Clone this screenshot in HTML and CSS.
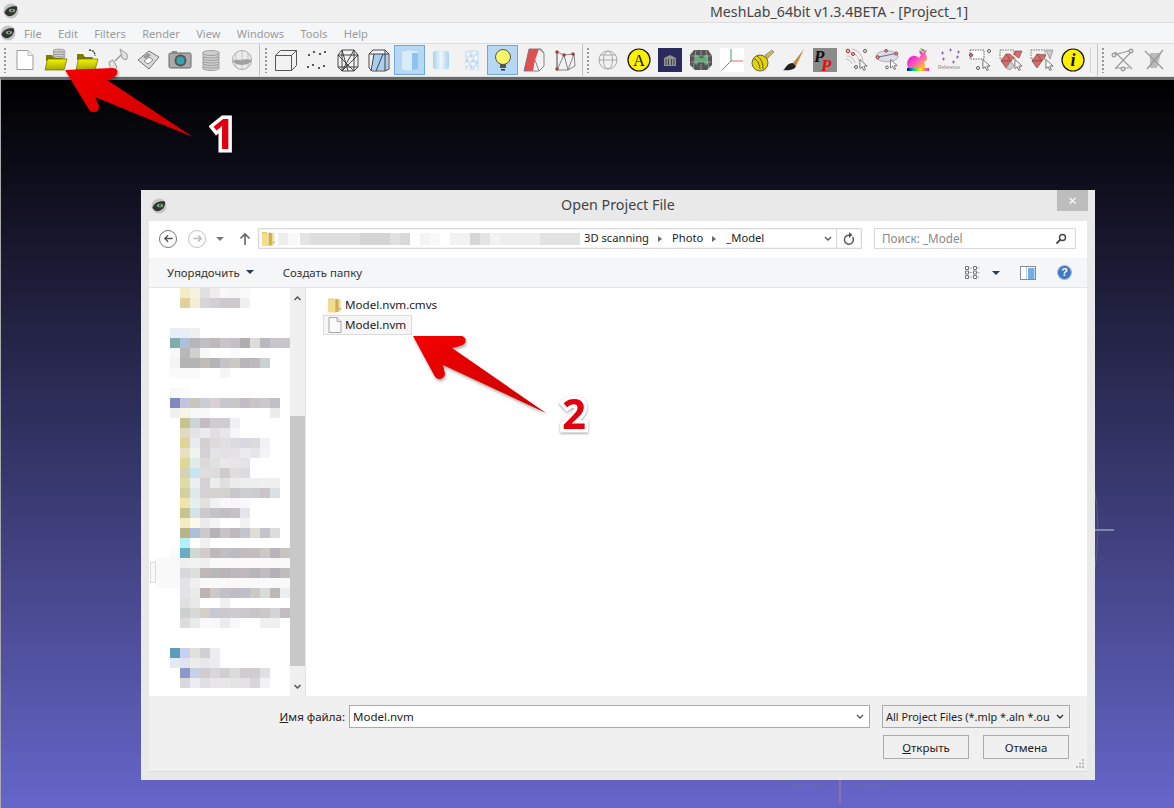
FILE: index.html
```html
<!DOCTYPE html>
<html lang="en">
<head>
<meta charset="utf-8">
<title>MeshLab</title>
<link rel="stylesheet" href="styles.css">
</head>
<body>
<svg class="defs" width="0" height="0">
  <defs>
    <linearGradient id="fy" x1="0" y1="0" x2="0" y2="1"><stop offset="0" stop-color="#f4f400"/><stop offset="1" stop-color="#a8a800"/></linearGradient>
  </defs>
  <symbol id="eye" viewBox="0 0 16 16">
    <circle cx="8" cy="8" r="7.500" fill="#c4c4c4"/>
    <path d="M1.500 9.500C3 5 8 2.500 14 3.500c.5 3-1 8-6 9.500-3 .7-5.500-1-6.500-3.500z" fill="#333"/>
    <ellipse cx="9" cy="7.500" rx="3.200" ry="1.800" fill="#7fa585"/>
    <circle cx="9" cy="7.500" r=".9" fill="#1b2b1b"/>
  </symbol>
  <symbol id="cur" viewBox="0 0 10 14">
    <path d="M1 1v10l2.500-2 1.800 4 1.800-.8-1.800-4H9z" fill="#fff" stroke="#555" stroke-width=".9"/>
  </symbol>
  <symbol id="folder" viewBox="0 0 14 17">
    <path d="M0 1.500h5l1 1h6V16H0z" fill="#e8c96f"/>
    <path d="M0 3h7.500v13.500H0z" fill="#f3dc8c"/>
    <path d="M7.500 1.500l3.500 1.500v12l-3.500 1.500z" fill="#cfae55"/>
    <path d="M11 3l2.500-1v13L11 15.500z" fill="#f2e4ae"/>
    <path d="M11.500 12l2-.5v1.500l-2 .5z" fill="#8fb4c9"/>
  </symbol>
  <symbol id="doc" viewBox="0 0 14 16">
    <path d="M1 .5h8l4 4v11H1z" fill="#fafafa" stroke="#a8a8a8"/>
    <path d="M9 .5v4h4" fill="#eee" stroke="#a8a8a8"/>
  </symbol>
</svg>

<div class="app">
  <header class="titlebar">
    <svg class="logo"><use href="#eye"/></svg>
    <span class="apptitle">MeshLab_64bit v1.3.4BETA - [Project_1]</span>
  </header>
  <nav class="menubar">
    <svg class="logo"><use href="#eye"/></svg>
    <span class="menu">File</span><span class="menu">Edit</span><span class="menu">Filters</span><span class="menu">Render</span><span class="menu">View</span><span class="menu">Windows</span><span class="menu">Tools</span><span class="menu">Help</span>
  </nav>
  <div class="toolbar">
    <i class="grip"></i>
    <span class="tb"><svg viewBox="0 0 24 24"><path d="M4 2.500h11l5 5v14H4z" fill="#fff" stroke="#9a9a9a"/><path d="M15 2.500v5h5" fill="#eee" stroke="#bbb"/></svg></span>
    <span class="tb"><svg viewBox="0 0 24 24"><g fill="#d4d4d4" stroke="#777" stroke-width=".7"><ellipse cx="15" cy="3" rx="6" ry="1.800"/><ellipse cx="15" cy="5.500" rx="6" ry="1.800"/><ellipse cx="15" cy="8" rx="6" ry="1.800"/><ellipse cx="15" cy="10.500" rx="6" ry="1.800"/></g><path d="M2 7h6l2 3h9l-1 3H2z" fill="#7c7c00"/><path d="M1 22L3.500 11H23l-3 11z" fill="url(#fy)" stroke="#6c6c00" stroke-width=".7"/></svg></span>
    <span class="tb"><svg viewBox="0 0 24 24"><path d="M14 2c4 0 6 2 6 6" fill="none" stroke="#333" stroke-width="1.300" stroke-dasharray="2 1"/><path d="M2 6h6l2 3h8l-1 3H2z" fill="#7c7c00"/><path d="M1 22L3.500 11H23l-3 11z" fill="url(#fy)" stroke="#6c6c00" stroke-width=".7"/></svg></span>
    <span class="tb"><svg viewBox="0 0 24 24"><path d="M14 1l7 5c1 2 0 5-1 6l-4-2-1-5zM3 14l4-2 4 7-2 4-4-2c-1-2-2-5-2-7z" fill="#e0e0e0" stroke="#9a9a9a"/><path d="M9 13l6-6" stroke="#999" stroke-width="1.500"/></svg></span>
    <span class="tb"><svg viewBox="0 0 24 24"><path d="M1 12L12 3l10 6-10 12z" fill="#dadada" stroke="#777"/><path d="M7 13l5-4 4 3-5 4z" fill="#fff" stroke="#888"/><path d="M6 9l5-4 3 2-5 4z" fill="#999"/></svg></span>
    <span class="tb"><svg viewBox="0 0 24 24"><rect x="1" y="5" width="22" height="15" rx="1.500" fill="#a9a9a9" stroke="#666"/><rect x="4" y="3" width="5" height="3" fill="#888"/><circle cx="12.500" cy="12.500" r="6" fill="#555"/><circle cx="12.500" cy="12.500" r="4" fill="#2fa6ad"/></svg></span>
    <span class="tb"><svg viewBox="0 0 24 24"><g fill="#cfcfcf" stroke="#858585" stroke-width=".7"><ellipse cx="12" cy="20" rx="8.500" ry="2.500"/><ellipse cx="12" cy="17.500" rx="8.500" ry="2.500"/><ellipse cx="12" cy="15" rx="8.500" ry="2.500"/><ellipse cx="12" cy="12.500" rx="8.500" ry="2.500"/><ellipse cx="12" cy="10" rx="8.500" ry="2.500"/><ellipse cx="12" cy="7.500" rx="8.500" ry="2.500"/><ellipse cx="12" cy="5" rx="8.500" ry="2.500"/></g></svg></span>
    <span class="tb"><svg viewBox="0 0 24 24"><circle cx="12" cy="12" r="9.500" fill="#ececec" stroke="#aaa"/><path d="M3 12h18M12 3v18M6 5v14M18 5v14" stroke="#bbb" fill="none" stroke-width=".8"/><path d="M3 13c4-2 6 0 9-1s5-1 9 0v2c-5 4-13 4-18 0z" fill="#a2a2a2"/></svg></span>
    <i class="sep"></i><i class="grip"></i>
    <span class="tb"><svg viewBox="0 0 24 24" fill="none" stroke="#555"><path d="M1.500 7.500h16v15h-16zM1.500 7.500l5-5h16l-5 5M22.500 2.500v15l-5 5"/></svg></span>
    <span class="tb"><svg viewBox="0 0 24 24" fill="#333"><circle cx="4" cy="7" r="1.100"/><circle cx="9" cy="4" r="1.100"/><circle cx="15" cy="6" r="1.100"/><circle cx="20" cy="4" r="1.100"/><circle cx="3" cy="19" r="1.100"/><circle cx="8" cy="17" r="1.100"/><circle cx="14" cy="20" r="1.100"/><circle cx="19" cy="18" r="1.100"/></svg></span>
    <span class="tb"><svg viewBox="0 0 24 24" fill="none" stroke="#333" stroke-width=".9"><path d="M6 2h12l4 5v12l-4 4H6l-4-4V7zM6 2l6 21M18 2L6 23M2 7l16 16M22 7L6 23M6 2v21M18 2v21M2 7h20M2 19h20"/></svg></span>
    <span class="tb"><svg viewBox="0 0 24 24"><path d="M7 6h14v16H4z" fill="#a9cff0"/><path d="M6 2h12l4 4v15l-4 2H5l-3-3V6zM2 6h20M7 6L4 23M18 2v21M16 6L9 23" fill="none" stroke="#333" stroke-width=".9"/></svg></span>
    <span class="tb on"><svg viewBox="0 0 24 24"><path d="M4 4c4-2 12-2 16 0v17c-4 2-12 2-16 0z" fill="#d8ecfb"/><path d="M14 5h6v16l-6 1.500z" fill="#8fc3ef"/></svg></span>
    <span class="tb"><svg viewBox="0 0 24 24"><defs><linearGradient id="cy"><stop offset="0" stop-color="#a8d2f2"/><stop offset=".5" stop-color="#eef7fe"/><stop offset="1" stop-color="#a8d2f2"/></linearGradient></defs><path d="M4 4c3-2 13-2 16 0v16c-3 2-13 2-16 0z" fill="url(#cy)"/></svg></span>
    <span class="tb"><svg viewBox="0 0 24 24"><path d="M5 3c4-1.500 11-1.500 14 0v18c-3 1.500-10 1.500-14 0z" fill="#d4e4f2"/><g fill="#f6fafd"><circle cx="8" cy="6" r="1.500"/><circle cx="14" cy="5" r="1.500"/><circle cx="16" cy="10" r="1.700"/><circle cx="10" cy="11" r="1.700"/><circle cx="7" cy="16" r="1.500"/><circle cx="13" cy="16" r="1.700"/><circle cx="16" cy="20" r="1.300"/><circle cx="9" cy="20" r="1.300"/></g><g fill="#b6cde2"><circle cx="11" cy="8" r="1"/><circle cx="13" cy="13" r="1"/><circle cx="7" cy="13" r="1"/><circle cx="17" cy="15" r="1"/><circle cx="11" cy="19" r="1"/></g></svg></span>
    <span class="tb on"><svg viewBox="0 0 24 24"><circle cx="12" cy="9" r="7.500" fill="#f7f76a" stroke="#555"/><path d="M9 16h6v4H9z" fill="#555"/><path d="M10 21h4v1.500h-4z" fill="#333"/></svg></span>
    <span class="tb"><svg viewBox="0 0 24 24"><path d="M7 1h10l-4 11-2 11H2z" fill="#e24f4f"/><path d="M7 1L2 23h15l5-5V5l-3-4zM17 1l5 4M13 12l4 11" fill="none" stroke="#777" stroke-width=".9"/></svg></span>
    <span class="tb"><svg viewBox="0 0 24 24"><path d="M4 4l7 3 10-1 1 12-7 4-11 0zM11 7l-7 15M21 6l-6 16M4 4v18M11 7l4 15" fill="none" stroke="#777" stroke-width=".9"/><g fill="#a33b3b"><circle cx="4" cy="4" r="1.700"/><circle cx="11" cy="7" r="1.700"/><circle cx="20" cy="6" r="1.700"/><circle cx="4" cy="21" r="1.700"/></g></svg></span>
    <i class="sep"></i><i class="grip"></i>
    <span class="tb"><svg viewBox="0 0 24 24" fill="none" stroke="#aaa"><circle cx="12" cy="12" r="9"/><ellipse cx="12" cy="12" rx="4.500" ry="9"/><path d="M3 12h18M4.500 7h15"/></svg></span>
    <span class="tb"><svg viewBox="0 0 24 24"><circle cx="12" cy="12" r="11" fill="#ffef00" stroke="#111" stroke-width="1.200"/><text class="ta" x="12" y="17.500">A</text></svg></span>
    <span class="tb"><svg viewBox="0 0 24 24"><rect width="24" height="24" fill="#2a2a5c"/><path d="M6 10l6-3 6 3v8H6z" fill="#8f9290"/><path d="M8 11v6M10.500 11v6M13.500 11v6M16 11v6" stroke="#444"/></svg></span>
    <span class="tb"><svg viewBox="0 0 24 24"><path d="M5 2h14l4 6v9l-5 5H6l-5-5V7z" fill="#555"/><path d="M6 7h3l2 3h3l2-3h3v9l-3 1-1-3H9l-1 3-2-1z" fill="#5fae72"/><path d="M2 8l20 0M2 14h20M7 2l-3 20M17 2l3 20M12 2v6M12 16v6" stroke="#bbb" stroke-width=".6"/></svg></span>
    <span class="tb"><svg viewBox="0 0 24 24"><rect width="24" height="24" fill="#fff"/><path d="M11 13V1" stroke="#3fa34d"/><path d="M11 13h12" stroke="#e26a6a"/><path d="M11 13L2 22" stroke="#3a8fd6"/></svg></span>
    <span class="tb"><svg viewBox="0 0 24 24"><path d="M14 7l7-5 2 2-7 7z" fill="#c9b560" stroke="#777" stroke-width=".6"/><ellipse cx="9" cy="15" rx="8" ry="8" fill="#e3d400" stroke="#444" stroke-width=".8"/><path d="M3 11c3 1 5 3 6 10M6 8c3 2 6 5 6 13" stroke="#554" fill="none"/></svg></span>
    <span class="tb"><svg viewBox="0 0 24 24"><path d="M22 1L11 15l3 3z" fill="#c58b3c"/><path d="M11 15l3 3c-1 4-8 5-13 4 3-1 3-7 10-7z" fill="#222"/></svg></span>
    <span class="tb"><svg viewBox="0 0 24 24"><rect width="24" height="24" fill="#8b8b8b"/><text class="tp1" x="1" y="14">P</text><text class="tp2" x="8" y="22.500">P</text></svg></span>
    <span class="tb"><svg viewBox="0 0 24 24"><g fill="none" stroke="#bbb"><path d="M8 1c6 1 10 6 11 12M6 4c5 1 8 4 9 9M3 8c4 0 7 3 8 7M2 11c3 0 5 2 6 5"/></g><g fill="#e9c3c3" stroke="#a33"><circle cx="4" cy="3" r="1.800"/><circle cx="9" cy="6" r="1.500"/></g><circle cx="21" cy="3" r="1.500" fill="#fff" stroke="#555"/><circle cx="12" cy="19" r="1.500" fill="#fff" stroke="#555"/><use href="#cur" x="15" y="10" width="9" height="14"/></svg></span>
    <span class="tb"><svg viewBox="0 0 26 24"><ellipse cx="13" cy="8" rx="12" ry="6" fill="#dcdcec" stroke="#aaa"/><path d="M3 9L22 5" stroke="#666"/><g fill="#d89a9a" stroke="#933"><circle cx="3" cy="9" r="1.700"/><circle cx="12" cy="2" r="1.500"/><circle cx="23" cy="5" r="1.700"/></g><circle cx="13" cy="20" r="1.500" fill="#fff" stroke="#555"/><use href="#cur" x="16" y="10" width="9" height="14"/></svg></span>
    <span class="tb"><svg viewBox="0 0 24 24"><defs><linearGradient id="rb" x1="0" y1="0" x2="1" y2="1"><stop offset="0" stop-color="#6c3"/><stop offset=".3" stop-color="#e2d"/><stop offset=".6" stop-color="#f6a"/><stop offset="1" stop-color="#ee0"/></linearGradient><linearGradient id="rb2"><stop offset="0" stop-color="#00c"/><stop offset=".3" stop-color="#0c8"/><stop offset=".6" stop-color="#ee0"/><stop offset="1" stop-color="#e2d"/></linearGradient></defs><path d="M2 20C0 14 2 9 7 8c2-1 5 1 6 2l2-3c-2-2-2-4-1-5l3 3c1-2 3-3 4-3l-2 4c2 2 3 5 1 7l-2 1c1 2 2 4 1 6z" fill="url(#rb)"/><path d="M14 0l5 2-2 2z" fill="#4a3"/><rect x="1" y="20" width="22" height="3" fill="url(#rb2)"/></svg></span>
    <span class="tb"><svg viewBox="0 0 24 24"><g stroke="#8a5fb0" stroke-width=".9"><path d="M4 5h3M5.500 3.500v3M12 2h3M13.500.5v3M20 4h3M21.500 2.500v3M5 11h3M6.500 9.500v3M15 14h3M16.500 12.500v3M19 9h3M20.500 7.500v3"/></g><text class="tref" x="12" y="21">Reference</text></svg></span>
    <span class="tb"><svg viewBox="0 0 24 24"><rect x="2" y="2" width="14" height="9" fill="#fff" stroke="#666" stroke-dasharray="1.500 1"/><circle cx="21" cy="3" r="1.500" fill="#fff" stroke="#555"/><circle cx="3" cy="7" r="1.500" fill="#d88" stroke="#933"/><circle cx="10" cy="20" r="1.500" fill="#fff" stroke="#555"/><use href="#cur" x="14" y="10" width="9" height="14"/></svg></span>
    <span class="tb"><svg viewBox="0 0 24 24"><rect x="1" y="2" width="14" height="9" fill="none" stroke="#777" stroke-dasharray="1.500 1"/><g fill="#d96a6a" stroke="#7a4040" stroke-width=".6"><path d="M2 13l5-7 5 7z"/><path d="M2 13l5 7 5-7z"/><path d="M7 6l5 7 5-7z"/><path d="M16 3h7l-3 7h-5z"/></g><path d="M7 20l5-7 3 5-4 4z" fill="#ccc" stroke="#777" stroke-width=".6"/><path d="M9 3l11 9" stroke="#fff" stroke-width="1.500"/><use href="#cur" x="15" y="10" width="9" height="14"/></svg></span>
    <span class="tb"><svg viewBox="0 0 24 24"><rect x="1" y="2" width="14" height="9" fill="none" stroke="#777" stroke-dasharray="1.500 1"/><g fill="#d96a6a" stroke="#7a4040" stroke-width=".6"><path d="M2 13l5-7 5 7z"/><path d="M2 13l5 7 5-7z"/><path d="M7 6l5 7 4-6z"/></g><path d="M16 2h7l-3 9z" fill="#ccc" stroke="#777" stroke-width=".6"/><use href="#cur" x="15" y="10" width="9" height="14"/></svg></span>
    <span class="tb"><svg viewBox="0 0 24 24"><circle cx="12" cy="12" r="11" fill="#ffef00" stroke="#111" stroke-width="1.200"/><text class="ti" x="12" y="18">i</text></svg></span>
    <i class="sep faint"></i><i class="sep"></i><i class="grip"></i>
    <span class="tb"><svg viewBox="0 0 24 24"><path d="M4 4l17 17M20 4L4 21M3 7l18-5M4 20h14" stroke="#999" stroke-width="1.100" fill="none"/><g fill="#ddd" stroke="#888"><circle cx="3" cy="7" r="2"/><circle cx="20" cy="3" r="2"/><circle cx="12" cy="21" r="2"/></g></svg></span>
    <span class="tb"><svg viewBox="0 0 24 24"><path d="M8 5h11L15 20H8z" fill="#bbb"/><path d="M3 3l18 18M21 2L5 21" stroke="#999" stroke-width="1.300"/></svg></span>
    <span class="tb"><svg viewBox="0 0 24 24"><circle cx="4" cy="12" r="2" fill="#ccc" stroke="#888"/></svg></span>
  </div>
  <main class="viewport">
    <svg class="trackball" viewBox="0 0 1174 728"><circle class="tb-ring" cx="840" cy="450" r="258"/><path class="tb-h" d="M1095 450h19"/><path class="tb-v" d="M840 700v23"/></svg>
  </main>
</div>

<section class="dialog">
  <div class="dlg-title">
    <svg class="logo"><use href="#eye"/></svg>
    <span class="dlg-name">Open Project File</span>
    <span class="close">×</span>
  </div>
  <div class="dlg-body">
    <div class="nav">
      <span class="circle"><svg viewBox="0 0 18 18"><path d="M14 9H5M8.500 5L4.500 9l4 4" fill="none" stroke="#555" stroke-width="1.600"/></svg></span>
      <span class="circle off"><svg viewBox="0 0 18 18"><path d="M4 9h9M9.500 5l4 4-4 4" fill="none" stroke="#b8b8b8" stroke-width="1.600"/></svg></span>
      <i class="tri"></i>
      <svg class="up" viewBox="0 0 12 14"><path d="M6 13V2M1.500 6.500L6 2l4.500 4.500" fill="none" stroke="#666" stroke-width="1.600"/></svg>
      <div class="addr">
        <svg class="addr-folder"><use href="#folder"/></svg>
        <svg class="addr-blur" viewBox="0 0 304 12"><rect width="10" height="12" x="0" fill="#eee"/><rect width="10" height="12" x="10" fill="#f8f8f8"/><rect width="10" height="12" x="22" fill="#e4e4e4"/><rect width="50" height="12" x="32" fill="#dedede"/><rect width="30" height="12" x="82" fill="#d4d4d4"/><rect width="10" height="12" x="112" fill="#e0e0e0"/><rect width="10" height="12" x="122" fill="#d8d8d8"/><rect width="10" height="12" x="142" fill="#f4f4f4"/><rect width="10" height="12" x="152" fill="#f8f8f8"/><rect width="20" height="12" x="172" fill="#f2f2f2"/><rect width="10" height="12" x="192" fill="#d6d6d6"/><rect width="10" height="12" x="202" fill="#e4e4e4"/><rect width="20" height="12" x="212" fill="#f2f2f2"/><rect width="40" height="12" x="222" fill="#eee"/><rect width="40" height="12" x="262" fill="#e2e2e2"/></svg>
        <span class="crumb">3D scanning</span><i class="ctri"></i><span class="crumb">Photo</span><i class="ctri"></i><span class="crumb">_Model</span>
        <svg class="addr-chev" viewBox="0 0 8 6"><path d="M1 1l3 3 3-3" fill="none" stroke="#555" stroke-width="1.300"/></svg>
        <span class="refresh"><svg viewBox="0 0 12 14"><path d="M9.500 5a4.500 4.500 0 1 1-3.500-1.800" fill="none" stroke="#555" stroke-width="1.400"/><path d="M6 0v6l3.500-3z" fill="#555"/></svg></span>
      </div>
      <div class="search"><span>Поиск: _Model</span><svg viewBox="0 0 12 12"><circle cx="7.500" cy="4.500" r="3" fill="none" stroke="#444" stroke-width="1.400"/><path d="M5.500 6.500L1.500 10.500" stroke="#444" stroke-width="1.800"/></svg></div>
    </div>
    <div class="cmdbar">
      <span class="cmd">Упорядочить<i class="dtri"></i></span>
      <span class="cmd">Создать папку</span>
      <span class="cmd-right">
        <svg class="vw" viewBox="0 0 15 15"><g fill="none" stroke="#777"><path d="M.5 1.500h3v3h-3zM.5 6h3v3h-3zM.5 10.500h3v3h-3zM8.500 1.500h3v3h-3zM8.500 6h3v3h-3zM8.500 10.500h3v3h-3z"/></g><path d="M4.500 3h2.500M4.500 7.500h2.500M4.500 12h2.500M12.500 3h2M12.500 7.500h2M12.500 12h2" stroke="#aaa"/></svg>
        <i class="dtri"></i>
        <svg class="pane" viewBox="0 0 16 14"><rect x=".5" y=".5" width="15" height="13" fill="#fff" stroke="#8a8a8a"/><rect x="8" y="2" width="6.500" height="11" fill="#6fb0e6"/><path d="M6.500 1v12" stroke="#ccc"/></svg>
        <svg class="help" viewBox="0 0 14 14"><circle cx="7" cy="7" r="6.500" fill="#3f78c4" stroke="#aab9cf"/><text class="thelp" x="7" y="10.500">?</text></svg>
      </span>
    </div>
    <div class="browser">
      <aside class="tree">
        <svg class="mosaic" viewBox="149 288 141 408">
          <rect class="band" x="155" y="558" width="135" height="30"/>
          <g class="m" transform="translate(0 288)"><rect x="180" fill="#f3ecc4"/><rect x="190" fill="#f6f3dc"/><rect x="200" fill="#e2dfe2"/><rect x="210" fill="#eee"/><rect x="220" fill="#f8f8f8"/><rect x="230" fill="#f6f6f6"/><rect x="240" fill="#fafafa"/></g>
          <g class="m" transform="translate(0 298)"><rect x="180" fill="#e0d298"/><rect x="190" fill="#f3eed4"/><rect x="200" fill="#d8d4d8"/><rect x="210" fill="#d0d0d4"/><rect x="220" fill="#ccc8cc"/><rect x="230" fill="#ccc8cc"/><rect x="240" fill="#f0f0f2"/></g>
          <g class="m" transform="translate(0 328)"><rect x="170" fill="#e8eef6"/><rect x="180" fill="#e8eef6"/><rect x="190" fill="#f0f0f0"/></g>
          <g class="m" transform="translate(0 338)"><rect x="170" fill="#80acb0"/><rect x="180" fill="#acc0d8"/><rect x="190" fill="#b8b4b8"/><rect x="200" fill="#c0c0c4"/><rect x="210" fill="#bcb8bc"/><rect x="220" fill="#c8c4c8"/><rect x="230" fill="#c4c0c4"/><rect x="240" fill="#b0aeb0"/><rect x="250" fill="#dedcd8"/><rect x="260" fill="#b8b8c0"/><rect x="270" fill="#c8c6cc"/><rect x="280" fill="#c8c6c8"/></g>
          <g class="m" transform="translate(0 348)"><rect x="170" fill="#f8f8f8"/><rect x="180" fill="#b8b8ba"/><rect x="190" fill="#d0d0d0"/><rect x="200" fill="#f8f8f8"/><rect x="230" fill="#fafafa"/></g>
          <g class="m" transform="translate(0 358)"><rect x="170" fill="#f4f4f4"/><rect x="180" fill="#b4b4b4"/><rect x="190" fill="#b4b4b4"/><rect x="200" fill="#c0bcb8"/><rect x="210" fill="#b4b4b8"/><rect x="220" fill="#c4c4c8"/><rect x="230" fill="#ccc8c4"/><rect x="240" fill="#b8b6b8"/><rect x="250" fill="#bcb8bc"/><rect x="260" fill="#ccd0d0"/></g>
          <g class="m" transform="translate(0 368)"><rect x="170" fill="#fafafa"/><rect x="180" fill="#fafafa"/><rect x="190" fill="#fafafa"/><rect x="220" fill="#f6f6f6"/></g>
          <g class="m" transform="translate(0 388)"><rect x="170" fill="#f8f8f8"/><rect x="180" fill="#fafafa"/></g>
          <g class="m" transform="translate(0 398)"><rect x="170" fill="#8088bc"/><rect x="180" fill="#c0c4e0"/><rect x="190" fill="#c8c4c0"/><rect x="200" fill="#ccccd4"/><rect x="210" fill="#d8d0d4"/><rect x="220" fill="#c8c8cc"/><rect x="230" fill="#c8c8c8"/><rect x="240" fill="#c4bcc4"/><rect x="250" fill="#c8c4c8"/><rect x="260" fill="#ccc8cc"/><rect x="270" fill="#c0c0c4"/></g>
          <g class="m" transform="translate(0 408)"><rect x="170" fill="#f0f0f0"/><rect x="180" fill="#f8f4e8"/><rect x="190" fill="#f8f8f8"/><rect x="200" fill="#f8f8f8"/><rect x="270" fill="#ececec"/></g>
          <g class="m" transform="translate(0 418)"><rect x="180" fill="#c8c490"/><rect x="190" fill="#d0d4d4"/><rect x="200" fill="#c4bcc0"/><rect x="210" fill="#cfcdcf"/><rect x="220" fill="#cfcdcf"/><rect x="230" fill="#f0f0f4"/></g>
          <g class="m" transform="translate(0 428)"><rect x="180" fill="#e0dac0"/><rect x="190" fill="#e4e4e8"/><rect x="200" fill="#ecebec"/><rect x="210" fill="#e0dee0"/><rect x="220" fill="#e8e6e8"/><rect x="230" fill="#f6f6f8"/></g>
          <g class="m" transform="translate(0 438)"><rect x="180" fill="#e0d498"/><rect x="190" fill="#e8ecf0"/><rect x="200" fill="#d4d0d0"/><rect x="210" fill="#dcdcdc"/><rect x="220" fill="#e0dede"/><rect x="230" fill="#dcdcde"/><rect x="240" fill="#d8d8e0"/><rect x="250" fill="#dcdadc"/><rect x="260" fill="#f2f2f6"/></g>
          <g class="m" transform="translate(0 448)"><rect x="180" fill="#e8e0c0"/><rect x="190" fill="#f0f4f0"/><rect x="200" fill="#d4d0d4"/><rect x="210" fill="#e4e4e6"/><rect x="220" fill="#e2e2e2"/><rect x="230" fill="#e4e2e4"/><rect x="240" fill="#ececf0"/><rect x="250" fill="#e8e6e8"/><rect x="260" fill="#f4f4f8"/></g>
          <g class="m" transform="translate(0 458)"><rect x="180" fill="#e0d898"/><rect x="190" fill="#e0ece8"/><rect x="200" fill="#dcdad8"/><rect x="210" fill="#e0e0e0"/><rect x="220" fill="#e8e8e8"/><rect x="230" fill="#e6e6e6"/><rect x="240" fill="#e4e4e8"/></g>
          <g class="m" transform="translate(0 468)"><rect x="180" fill="#d4d4b0"/><rect x="190" fill="#c8e4f4"/><rect x="200" fill="#e0dedc"/><rect x="210" fill="#e0dcdc"/><rect x="220" fill="#ccccd0"/><rect x="230" fill="#e0dedc"/><rect x="240" fill="#dcdce0"/></g>
          <g class="m" transform="translate(0 478)"><rect x="180" fill="#e0dca8"/><rect x="190" fill="#ecf0ec"/><rect x="200" fill="#d4d0d4"/><rect x="210" fill="#ececec"/><rect x="220" fill="#e0e0e2"/><rect x="230" fill="#ececec"/><rect x="240" fill="#eeeeee"/><rect x="250" fill="#eeeeee"/><rect x="260" fill="#f0f0f0"/><rect x="270" fill="#f0f0f2"/></g>
          <g class="m" transform="translate(0 488)"><rect x="180" fill="#d4d0a0"/><rect x="190" fill="#e0e8ec"/><rect x="200" fill="#d4d0d4"/><rect x="210" fill="#d4d2d0"/><rect x="220" fill="#d4d2ce"/><rect x="230" fill="#c8c8cc"/><rect x="240" fill="#ccced0"/><rect x="250" fill="#ccccd0"/><rect x="260" fill="#c8c4c8"/><rect x="270" fill="#dce0e4"/></g>
          <g class="m" transform="translate(0 498)"><rect x="180" fill="#f0e4a8"/><rect x="190" fill="#e4f0f0"/><rect x="200" fill="#e4e0de"/><rect x="210" fill="#f0f2f4"/><rect x="220" fill="#f8f8fa"/><rect x="230" fill="#f8f6f8"/><rect x="240" fill="#f8f8fc"/></g>
          <g class="m" transform="translate(0 508)"><rect x="180" fill="#c8c490"/><rect x="190" fill="#d4e4e4"/><rect x="200" fill="#ccc8cc"/><rect x="210" fill="#c4c4c8"/><rect x="220" fill="#c0bec0"/><rect x="230" fill="#c4c2c4"/><rect x="240" fill="#e4e4ea"/></g>
          <g class="m" transform="translate(0 518)"><rect x="180" fill="#f4ecc0"/><rect x="190" fill="#fcf8ec"/><rect x="200" fill="#ececec"/><rect x="210" fill="#f4f4f4"/><rect x="240" fill="#f2f2f2"/></g>
          <g class="m" transform="translate(0 528)"><rect x="180" fill="#b8b488"/><rect x="190" fill="#acc0d8"/><rect x="200" fill="#ccc8cc"/><rect x="210" fill="#b4b4b6"/><rect x="220" fill="#c8c4c6"/><rect x="230" fill="#c0b8bc"/><rect x="240" fill="#c4c4cc"/><rect x="250" fill="#dedcd4"/><rect x="260" fill="#c4c4cc"/><rect x="270" fill="#dcdcde"/></g>
          <g class="m" transform="translate(0 538)"><rect x="180" fill="#b4f0fc"/><rect x="200" fill="#f0f0f0"/></g>
          <g class="m" transform="translate(0 548)"><rect x="170" fill="#fafafa"/><rect x="180" fill="#6cacc0"/><rect x="190" fill="#d0d8d4"/><rect x="200" fill="#d0ccc8"/><rect x="210" fill="#bcb8bc"/><rect x="220" fill="#c0bec0"/><rect x="230" fill="#bcbcc0"/><rect x="240" fill="#c4bcbc"/><rect x="250" fill="#c0bec0"/><rect x="260" fill="#ccc8c4"/><rect x="270" fill="#b8b4bc"/><rect x="280" fill="#c8c4c0"/></g>
          <g class="m" transform="translate(0 558)"><rect x="180" fill="#f0f0f0"/><rect x="190" fill="#f2f2f2"/><rect x="200" fill="#f0f0f0"/></g>
          <g class="m" transform="translate(0 568)"><rect x="180" fill="#d8d8dc"/><rect x="190" fill="#dce0dc"/><rect x="200" fill="#c0b8b8"/><rect x="210" fill="#b8b8b8"/><rect x="220" fill="#b8b4b8"/><rect x="230" fill="#bcb8bc"/><rect x="240" fill="#c0b8bc"/><rect x="250" fill="#b8b4b8"/><rect x="260" fill="#c0bcc0"/><rect x="270" fill="#b4b0b8"/><rect x="280" fill="#c0bcbc"/></g>
          <g class="m" transform="translate(0 578)"><rect x="180" fill="#e4e4e8"/><rect x="190" fill="#f0f0f2"/></g>
          <g class="m" transform="translate(0 588)"><rect x="180" fill="#e4e4e8"/><rect x="190" fill="#e8ece8"/><rect x="200" fill="#bcb4b4"/><rect x="210" fill="#ccc8c8"/><rect x="220" fill="#c0c0c8"/><rect x="230" fill="#c0bcc4"/><rect x="240" fill="#c0bec8"/><rect x="250" fill="#ccc8c4"/><rect x="260" fill="#d8dcd8"/><rect x="270" fill="#bcb8b8"/><rect x="280" fill="#ecedf0"/></g>
          <g class="m" transform="translate(0 598)"><rect x="180" fill="#e0e0e0"/><rect x="190" fill="#e8e8e8"/><rect x="220" fill="#f0f0f2"/></g>
          <g class="m" transform="translate(0 608)"><rect x="180" fill="#ccd0d0"/><rect x="190" fill="#d8d8d8"/><rect x="200" fill="#d4d0c8"/><rect x="210" fill="#c8c8d4"/><rect x="220" fill="#ccc8cc"/><rect x="230" fill="#ccccd0"/><rect x="240" fill="#ccc8cc"/><rect x="250" fill="#c8c4c8"/><rect x="260" fill="#ccc8c8"/><rect x="270" fill="#d4d4d8"/><rect x="280" fill="#c4bcc0"/></g>
          <g class="m" transform="translate(0 618)"><rect x="180" fill="#dcdce0"/><rect x="190" fill="#e8ece8"/><rect x="200" fill="#f8f8fa"/><rect x="210" fill="#f8f8fa"/><rect x="220" fill="#ececec"/><rect x="230" fill="#f8f8f8"/><rect x="260" fill="#f0f0f0"/><rect x="270" fill="#f0f0f0"/></g>
          <g class="m" transform="translate(0 648)"><rect x="170" fill="#5c9cb8"/><rect x="180" fill="#c8d0f0"/><rect x="190" fill="#e0e0dc"/><rect x="200" fill="#d0d0d4"/><rect x="210" fill="#ececf0"/></g>
          <g class="m" transform="translate(0 658)"><rect x="170" fill="#e4e8f4"/><rect x="180" fill="#e0e4f0"/><rect x="190" fill="#ecece8"/><rect x="200" fill="#e8e8ec"/><rect x="210" fill="#ececf0"/></g>
          <g class="m" transform="translate(0 668)"><rect x="180" fill="#8c98c8"/><rect x="190" fill="#c8d0e8"/><rect x="200" fill="#d0ccd0"/><rect x="210" fill="#d8d8d8"/><rect x="220" fill="#d0d0d4"/><rect x="230" fill="#dcdcdc"/><rect x="240" fill="#d0ccd0"/><rect x="250" fill="#d0ccd0"/><rect x="260" fill="#e0e0e0"/></g>
          <g class="m" transform="translate(0 678)"><rect x="180" fill="#d8d8dc"/><rect x="190" fill="#ececf4"/><rect x="200" fill="#e0e0e4"/><rect x="210" fill="#e8e6e8"/><rect x="220" fill="#e8e6e8"/><rect x="230" fill="#e4e4e4"/><rect x="240" fill="#e4e2e2"/><rect x="250" fill="#d8d6d8"/><rect x="260" fill="#f2f2f4"/></g>
          <rect class="bracket" x="150.500" y="562.500" width="5" height="20"/>
        </svg>
      </aside>
      <div class="scroll">
        <svg class="sb-arrow" viewBox="0 0 8 6"><path d="M1 5l3-3 3 3" fill="none" stroke="#555" stroke-width="1.500"/></svg>
        <div class="sb-track"><div class="sb-thumb"></div></div>
        <svg class="sb-arrow" viewBox="0 0 8 6"><path d="M1 1l3 3 3-3" fill="none" stroke="#555" stroke-width="1.500"/></svg>
      </div>
      <div class="files">
        <div class="file"><svg class="ficon"><use href="#folder"/></svg><span>Model.nvm.cmvs</span></div>
        <div class="file sel"><svg class="ficon"><use href="#doc"/></svg><span>Model.nvm</span></div>
      </div>
    </div>
    <div class="panel">
      <div class="row">
        <label class="lbl"><u>И</u>мя файла:</label>
        <div class="input"><span>Model.nvm</span><svg viewBox="0 0 8 6"><path d="M1 1l3 3 3-3" fill="none" stroke="#555" stroke-width="1.300"/></svg></div>
        <div class="combo"><span>All Project Files (*.mlp *.aln *.ou</span><svg viewBox="0 0 8 6"><path d="M1 1l3 3 3-3" fill="none" stroke="#333" stroke-width="1.300"/></svg></div>
      </div>
      <div class="row btns">
        <span class="btn"><u>О</u>ткрыть</span>
        <span class="btn">Отмена</span>
      </div>
      <svg class="resize" viewBox="0 0 10 10" fill="#bbb"><rect x="7" y="0" width="2" height="2"/><rect x="4" y="3.500" width="2" height="2"/><rect x="7" y="3.500" width="2" height="2"/><rect x="1" y="7" width="2" height="2"/><rect x="4" y="7" width="2" height="2"/><rect x="7" y="7" width="2" height="2"/></svg>
    </div>
  </div>
</section>

<svg class="arrows" viewBox="0 0 1174 808">
  <defs>
    <linearGradient id="red" x1="0" y1="0" x2="1" y2="1"><stop offset="0" stop-color="#f40000"/><stop offset="1" stop-color="#c80008"/></linearGradient>
    <filter id="sh" x="-10%" y="-10%" width="130%" height="130%"><feDropShadow dx="1" dy="2" stdDeviation="1.500" flood-color="#000" flood-opacity=".35"/></filter>
  </defs>
  <path class="arrow" d="M65 70L113 68Q119 69 117 74Q115 78 107 80L193 137L95 97L99 106Q99 112 93 112Q90 112 88 108z"/>
  <path class="arrow" d="M413 336L462 336Q467 338 465 343Q463 346 452 348L546 413L443 365L445 374Q444 379 439 379Q436 379 434 375z"/>
</svg>
<span class="num n1">1</span>
<span class="num n2">2</span>
</body>
</html>
```

FILE: styles.css
```css
* { box-sizing: border-box; }
html, body { margin: 0; padding: 0; height: 100%; }
body { width: 1174px; height: 808px; overflow: hidden; position: relative; font-family: "Noto Sans", "Open Sans", sans-serif; color: #222; }
i { display: block; font-style: normal; }
svg { display: block; flex: none; }
.defs { position: absolute; }

.app { display: flex; flex-direction: column; height: 808px; }
.titlebar { height: 23px; background: #f0f0f0; border-bottom: 1px solid #dcdcdc; display: flex; align-items: center; padding-left: 3px; position: relative; }
.logo { width: 16px; height: 16px; }
.apptitle { margin-left: 691px; font-size: 14.180px; color: #444; white-space: nowrap; }
.menubar { height: 21px; background: #f5f6f8; border-bottom: 1px solid #dedede; display: flex; align-items: center; }
.menu { font-size: 11.100px; color: #9b9b9b; margin-right: 16.300px; }
.menubar .logo { margin-right: 8px; }
.toolbar { height: 33px; background: #f2f2f2; display: flex; align-items: center; padding-left: 4px; overflow: hidden; border-bottom: 1px solid #ddd; }
.grip { width: 2px; height: 26px; margin-right: 3.500px; flex: none; background-image: radial-gradient(circle, #999 .8px, transparent 1px); background-size: 2px 4px; }
.sep { width: 1px; height: 33px; background: #c4c4c4; margin: 0 4.500px 0 1.500px; flex: none; }
.sep.faint { height: 26px; background: #d6d6d6; margin: 0 4.500px 0 1px; }
.tb { width: 31px; height: 30px; flex: none; display: flex; align-items: center; justify-content: center; }
.tb svg { width: 24px; height: 24px; }
.tb.on { background: #b6d8f5; border: 1px solid #6fa9db; }
.ta { font: 16px "Liberation Serif", serif; text-anchor: middle; fill: #111; }
.ti { font: italic 700 18px "Liberation Serif", serif; text-anchor: middle; fill: #111; }
.tp1 { font: italic 700 17px "Liberation Serif", serif; fill: #111; }
.tp2 { font: italic 700 17px "Liberation Serif", serif; fill: #e01010; }
.tref { font: 4.800px "Liberation Sans", sans-serif; text-anchor: middle; fill: #888; }
.thelp { font: 700 10px "Liberation Sans", sans-serif; text-anchor: middle; fill: #fff; }

.viewport { flex: 1; position: relative; border-top: 3px solid #6a6a6a; border-left: 1px solid #aaa; background: linear-gradient(#000 0%, #6666ca 100%); }
.trackball { position: absolute; left: -1px; top: 0; width: 1174px; height: 728px; fill: none; }
.tb-ring { stroke: #6c6c94; stroke-opacity: .6; }
.tb-h { stroke: #7a88aa; stroke-width: 2; }
.tb-v { stroke: #8a70b4; stroke-width: 2; }

.dialog { position: absolute; left: 141px; top: 190px; width: 954px; height: 590px; background: #e9e9e9; display: flex; flex-direction: column; padding: 0 8px 8px 8px; }
.dlg-title { height: 31px; flex: none; display: flex; align-items: center; position: relative; margin-left: 2px; }
.dlg-name { position: absolute; left: 410px; top: 5px; font-size: 14.300px; color: #444; white-space: nowrap; }
.close { position: absolute; right: -1px; top: 0; width: 31px; height: 21px; background: #bdbdbd; color: #fff; display: flex; align-items: center; justify-content: center; font-size: 15px; line-height: 1; }
.dlg-body { flex: 1; display: flex; flex-direction: column; background: #fff; min-height: 0; }

.nav { height: 37px; flex: none; display: flex; align-items: center; padding: 0 0 2px 10px; background: #fff; }
.circle { width: 18px; height: 18px; border: 1.500px solid #777; border-radius: 50%; margin-right: 11px; display: flex; align-items: center; justify-content: center; }
.circle svg { width: 15px; height: 15px; }
.circle.off { border-color: #c4c4c4; margin-right: 10px; }
.tri { width: 0; height: 0; border: 4px solid transparent; border-top: 4px solid #7a7a7a; border-bottom: 0; margin-right: 15px; }
.up { width: 12px; height: 14px; margin-right: 7px; }
.addr { width: 604px; height: 21px; border: 1px solid #d8d8d8; display: flex; align-items: center; position: relative; padding-left: 3px; box-shadow: inset 0 0 0 1px #f4f4f4; }
.addr-folder { width: 13px; height: 17px; margin-right: 3px; }
.addr-blur { width: 304px; height: 12px; margin-right: 2px; }
.crumb { font-size: 11.200px; color: #222; white-space: nowrap; margin-bottom: 2px; }
.ctri { width: 0; height: 0; border: 3.500px solid transparent; border-left: 4px solid #666; border-right: 0; margin: 0 10px 0 9px; }
.addr-chev { width: 8px; height: 6px; position: absolute; right: 29px; top: 7px; }
.refresh { position: absolute; right: 0; top: 0; bottom: 0; width: 25px; border-left: 1px solid #d8d8d8; display: flex; align-items: center; justify-content: center; }
.refresh svg { width: 12px; height: 14px; }
.search { width: 202px; height: 21px; margin-left: 12px; border: 1px solid #d8d8d8; display: flex; align-items: center; justify-content: space-between; padding: 0 8px 0 7px; font-size: 11.700px; color: #888; }
.search span { margin-bottom: 2px; }
.search svg { width: 12px; height: 12px; }

.cmdbar { height: 30px; flex: none; background: #f5f6f7; border-bottom: 1px solid #e5e5e5; display: flex; align-items: center; padding-left: 18px; font-size: 11.400px; }
.cmd { display: flex; align-items: center; color: #333; margin-right: 29px; margin-bottom: 1px; white-space: nowrap; }
.dtri { width: 0; height: 0; border: 4px solid transparent; border-top: 4px solid #2a3a5a; border-bottom: 0; margin-left: 6px; }
.cmd-right { margin-left: auto; display: flex; align-items: center; padding-right: 15px; }
.vw { width: 15px; height: 15px; margin-right: 12px; }
.cmd-right .dtri { margin: 0 20px 0 0; }
.pane { width: 16px; height: 14px; margin-right: 21px; }
.help { width: 15px; height: 15px; }

.browser { flex: 1; display: flex; min-height: 0; background: #fff; }
.tree { width: 141px; flex: none; background: #fff; overflow: hidden; }
.mosaic { width: 141px; height: 408px; shape-rendering: crispEdges; }
.m rect { width: 10px; height: 10px; }
.band { fill: #f9f9f9; }
.bracket { fill: #f9f9f9; stroke: #dcdcdc; }
.scroll { width: 16px; flex: none; background: #f0f0f0; display: flex; flex-direction: column; align-items: center; padding-top: 7px; padding-bottom: 6px; border-right: 1px solid #e4e4e4; }
.sb-arrow { width: 9px; height: 6px; }
.sb-track { flex: 1; width: 100%; padding-top: 115px; padding-bottom: 18px; display: flex; }
.sb-thumb { flex: 1; background: #c8c8c8; }
.files { flex: 1; padding: 7px 0 0 17px; display: flex; flex-direction: column; font-size: 11.600px; }
.file { display: flex; align-items: center; gap: 3px; height: 21px; width: 89px; border: 1px solid transparent; padding: 0 0 0 4px; white-space: nowrap; color: #222; }
.file span { margin-bottom: 2px; }
.file.sel { background: #f6f6f6; border-color: #dcdcdc; height: 20px; margin-top: -1px; }
.ficon { width: 14px; height: 16px; margin-top: -1px; }

.panel { height: 76px; flex: none; background: #f0f0f0; border-bottom: 1px solid #dcdcdc; position: relative; padding: 9px 17px 0 0; display: flex; flex-direction: column; align-items: flex-end; gap: 7px; }
.row { display: flex; align-items: center; }
.lbl { font-size: 11.500px; color: #222; margin-right: 4px; white-space: nowrap; }
.input { width: 521px; height: 23px; background: #fff; border: 1px solid #ababab; display: flex; align-items: center; justify-content: space-between; padding: 0 5px 0 3px; font-size: 11.500px; }
.input svg, .combo svg { width: 8px; height: 6px; }
.combo { width: 188px; height: 23px; margin-left: 12px; background: #efefef; border: 1px solid #ababab; display: flex; align-items: center; padding: 0 5px 0 3px; font-size: 10.900px; gap: 4px; }
.combo span { flex: 1; white-space: nowrap; min-width: 0; }
.btns { gap: 14px; padding-right: 1px; }
.btn { width: 86px; height: 24px; background: #f0f0f0; border: 1px solid #ababab; display: flex; align-items: center; justify-content: center; font-size: 11.500px; color: #222; }
.resize { position: absolute; right: 2px; bottom: 2px; width: 10px; height: 10px; }

.arrows { position: absolute; left: 0; top: 0; width: 1174px; height: 808px; pointer-events: none; }
.arrow { fill: url(#red); filter: url(#sh); }
.num { position: absolute; font: 700 42px/1 "Open Sans", sans-serif; color: #e00010; -webkit-text-stroke: 7px #fff; paint-order: stroke fill; filter: drop-shadow(0 1px 1px rgba(0,0,0,.4)); }
.n1 { left: 211px; top: 112px; }
.n2 { left: 562px; top: 392px; }
```
